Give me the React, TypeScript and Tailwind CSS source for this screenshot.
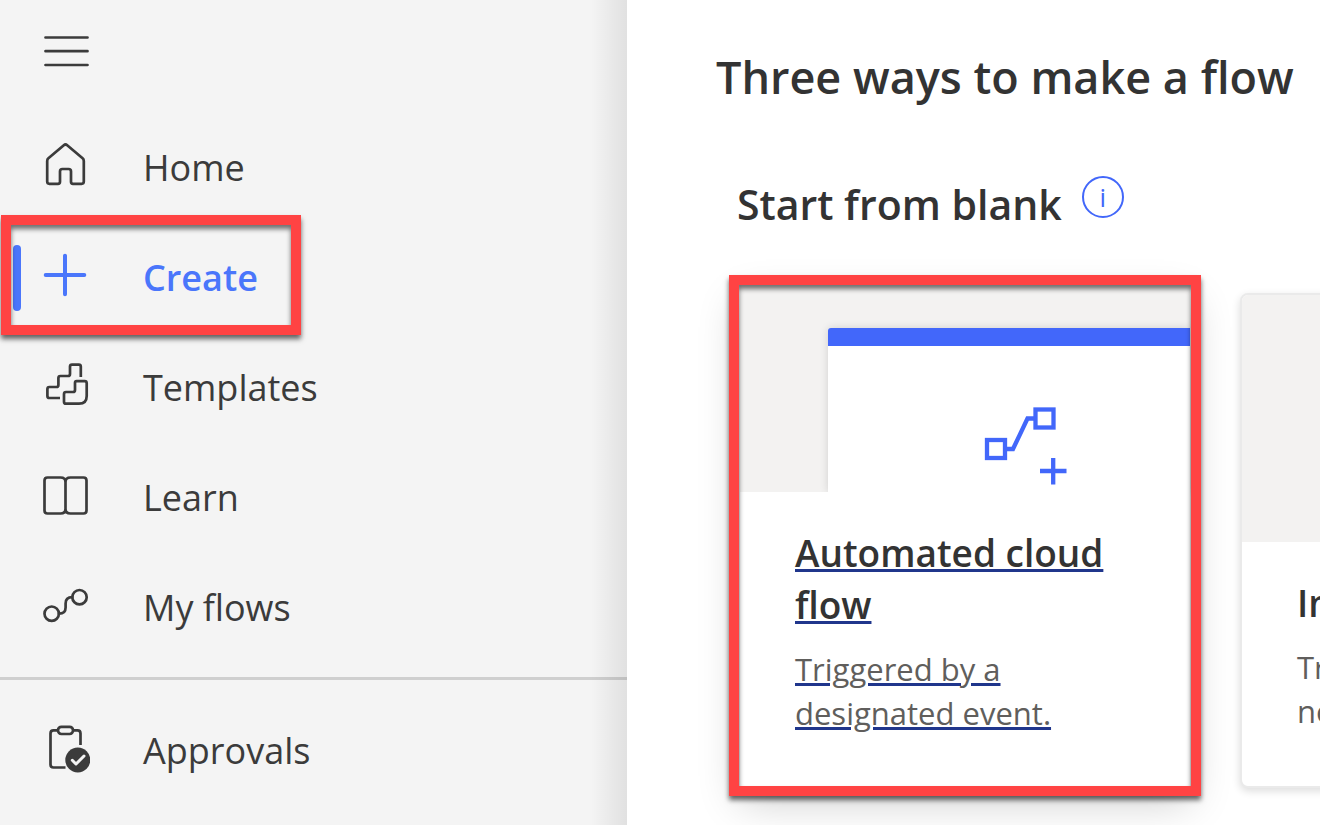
import type { ReactNode } from "react";

const strokeProps = {
  fill: "none",
  stroke: "currentColor",
  strokeWidth: 2.7,
  strokeLinecap: "round",
  strokeLinejoin: "round",
} as const;

function Icon({ children }: { children: ReactNode }) {
  return (
    <svg viewBox="0 0 50 50" className="size-[50px] shrink-0" aria-hidden="true" {...strokeProps}>
      {children}
    </svg>
  );
}

const HomeIcon = () => (
  <Icon>
    <path d="M23.8 5.2q1.7-1.4 3.4 0L42.6 18.3q1.2 1 1.2 2.6V41.6q0 2.2-2.2 2.2H33q-2 0-2-2V31.4q0-2.4-2.4-2.4H22.4Q20 29 20 31.4V41.8q0 2-2 2H9.4q-2.2 0-2.2-2.2V20.9q0-1.6 1.2-2.6Z" />
  </Icon>
);

const PlusIcon = () => (
  <Icon>
    <path strokeWidth="4" d="M5.7 25H44.3M25 5.7V44.3" />
  </Icon>
);

const TemplatesIcon = () => (
  <Icon>
    <path strokeLinecap="butt" d="M20 38H9.4q-2 0-2-2V29q0-2 2-2H16.400q2 0 2-2V18q0-2 2-2H28q2 0 2-2V6.600q0-2 2-2H38.800q2 0 2 2V17" />
    <path d="M36.600 21.200H44.700q2 0 2 2V36q0 7.700-7.700 7.700H26q-2 0-2-2V34q0-2 2-2H33q2 0 2-2V22.800q0-1.600 1.600-1.600Z" />
  </Icon>
);

const LearnIcon = () => (
  <Icon>
    <path d="M25.500 12Q25.500 7.500 20.500 7.500H7.500q-3 0-3 3V40.500q0 3 3 3H20.500q5 0 5-4.500ZM25.500 12Q25.500 7.500 30.500 7.500H43.500q3 0 3 3V40.500q0 3-3 3H30.500q-5 0-5-4.500" />
  </Icon>
);

const FlowsIcon = () => (
  <Icon>
    <circle cx="11.700" cy="33.700" r="7.200" />
    <circle cx="39.500" cy="17.200" r="7.200" />
    <path d="M18.900 33.700q6.700 0 6.700-6.200V23.500q0-6.300 6.700-6.300" />
  </Icon>
);

const ApprovalsIcon = () => (
  <Icon>
    <path strokeLinecap="butt" d="M18 7.400H13.500q-3 0-3 3V41.500q0 3 3 3H25.500M33 7.400H37.500q3 0 3 3V22" />
    <rect x="18" y="3.800" width="15" height="7.200" rx="3.400" />
    <circle cx="37.800" cy="37" r="12.500" fill="currentColor" stroke="none" />
    <path stroke="#f4f4f4" strokeWidth="3" d="M32.300 37.300L36 41L44 33" />
  </Icon>
);

const navItems = [
  { label: "Home", icon: <HomeIcon /> },
  { label: "Create", icon: <PlusIcon />, active: true },
  { label: "Templates", icon: <TemplatesIcon /> },
  { label: "Learn", icon: <LearnIcon /> },
  { label: "My flows", icon: <FlowsIcon /> },
];

const frame =
  "pointer-events-none absolute z-10 border-[10px] border-[#ff4343] shadow-[0_4px_5px_rgba(0,0,0,0.6),inset_0_4px_5px_rgba(0,0,0,0.55)]";

function NavLink({ label, icon, active }: { label: string; icon: ReactNode; active?: boolean }) {
  return (
    <a
      href="#"
      aria-current={active ? "page" : undefined}
      className={`relative flex h-[110px] items-center gap-[53px] pl-10 text-[36px] leading-[50px] ${
        active ? "font-semibold text-[#4a76fb]" : "text-[#3b3b3b]"
      }`}
    >
      {icon}
      <span className="pt-1.5">{label}</span>
      {active && (
        <>
          <span className="absolute top-[25px] left-[13px] h-[66px] w-2 rounded-full bg-[#4a76fb]" />
          <span className={`${frame} -top-[5px] left-px h-[120px] w-[300px]`} />
        </>
      )}
    </a>
  );
}

function FlowIllustration() {
  return (
    <div className="flex grow justify-center rounded-tl-[3px] border-t-[18px] border-[#4267fa] bg-white pt-[59px] pl-[34px] shadow-[0_0_8px_rgba(0,0,0,0.14)]">
      <svg viewBox="0 0 84 82" className="h-[82px] w-[84px]" fill="none" stroke="#4267fa" strokeWidth="4.300" aria-hidden="true">
        <rect x="3" y="35" width="18" height="18" />
        <rect x="51.500" y="4.500" width="18" height="18" />
        <path d="M22 44H29L43.500 13.500H50M56 66H82.500M69.200 53V79.500" />
      </svg>
    </div>
  );
}

export default function App() {
  return (
    <div className="flex h-screen overflow-hidden bg-white font-['Open_Sans','Noto_Sans',sans-serif]">
      <aside className="relative w-[47.5%] shrink-0 overflow-hidden bg-[#f4f4f4]">
        <div className="absolute inset-y-0 right-0 w-9 bg-linear-to-r from-black/0 to-black/8" />
        <div className="flex h-[110px] items-start pt-[26px] pl-[42px]">
          <button type="button" aria-label="Toggle navigation" className="text-[#3b3b3b]">
            <svg viewBox="0 0 50 50" className="size-[50px]" aria-hidden="true" {...strokeProps}>
              <path d="M3.500 11.500H45.500M3.500 25.200H45.500M3.500 39H45.500" />
            </svg>
          </button>
        </div>
        <nav aria-label="Main">
          {navItems.map((item) => (
            <NavLink key={item.label} {...item} />
          ))}
          <hr className="mt-[17px] mb-[13px] border-t-[3px] border-[#cfcfcf]" />
          <NavLink label="Approvals" icon={<ApprovalsIcon />} />
        </nav>
      </aside>

      <main className="min-w-0 grow overflow-hidden pt-11">
        <h1 className="pl-[89px] text-[45px] leading-[66px] font-semibold whitespace-nowrap text-[#333]">
          Three ways to make a flow
        </h1>
        <div className="mt-[66px] flex gap-5 pl-[110px]">
          <h2 className="text-[41px] leading-[56px] font-semibold whitespace-nowrap text-[#333]">Start from blank</h2>
          <button
            type="button"
            aria-label="More information"
            className="flex size-[42px] items-center justify-center rounded-full border-2 border-[#4267fa] text-[26px] leading-none text-[#4267fa]"
          >
            i
          </button>
        </div>

        <div className="mt-[53px] flex items-start gap-[50px] pl-[113px]">
          <a href="#" className="relative block w-[450px] shrink-0 bg-white shadow-[0_16px_40px_rgba(0,0,0,0.2)]">
            <div className="flex h-[207px] bg-[#f3f2f1] pt-[43px] pl-[88px]">
              <FlowIllustration />
            </div>
            <div className="relative h-[294px] bg-white px-[55px] pt-[35px]">
              <h3 className="text-[37px] leading-[52px] font-semibold text-[#333] underline decoration-[#20368c] decoration-3 underline-offset-2">
                Automated cloud flow
              </h3>
              <p className="mt-4 text-[31px] leading-[44px] text-[#605e5c] underline decoration-[#20368c] decoration-3 underline-offset-2">
                Triggered by a designated event.
              </p>
            </div>
            <span className={`${frame} -inset-x-[11px] -top-[10px] -bottom-[10px]`} />
          </a>

          <a
            href="#"
            className="mt-2 block w-[450px] shrink-0 overflow-hidden rounded-lg border-2 border-[#eaeaea] bg-white shadow-[0_3px_8px_rgba(0,0,0,0.14)]"
          >
            <div className="h-[247px] bg-[#f3f2f1]" />
            <div className="h-[244px] px-[55px] pt-[35px]">
              <h3 className="text-[37px] leading-[52px] font-semibold whitespace-nowrap text-[#333]">Instant cloud flow</h3>
              <p className="mt-4 text-[31px] leading-[44px] text-[#605e5c]">
                Triggered manually as
                <br />
                needed.
              </p>
            </div>
          </a>
        </div>
      </main>
    </div>
  );
}
